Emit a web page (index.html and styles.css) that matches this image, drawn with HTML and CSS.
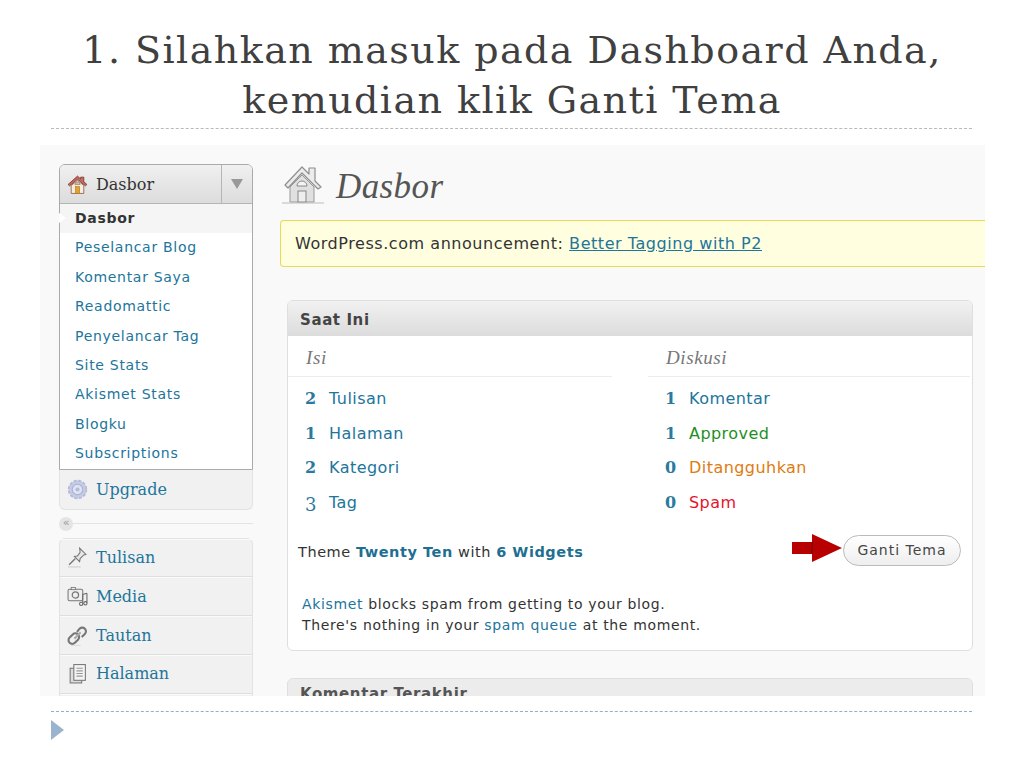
FILE: index.html
```html
<!DOCTYPE html>
<html lang="id">
<head>
<meta charset="utf-8">
<title>Ganti Tema</title>
<link rel="stylesheet" href="styles.css">
</head>
<body>
<div class="slide">
  <h1 class="title">1. Silahkan masuk pada Dashboard Anda,<br>kemudian klik Ganti Tema</h1>
  <div class="rule"></div>
  <div class="shot">
    <aside class="side">
      <div class="menu-open">
        <div class="menu-head">
          <div class="menu-head-label">
            <svg class="ic" viewBox="0 0 20 20"><path d="M1 10 10 2l3 2.700V3h3v4.400L19 10l-1.500 1.300L10 5 2.500 11.300z" fill="#c46a5e" stroke="#6d2a22" stroke-width=".7"/><path d="M4 11l6-5 6 5v7.500H4z" fill="#f4ece0" stroke="#8a5f4d" stroke-width=".8"/><path d="M7.500 10a2.500 2.500 0 0 1 5 0z" fill="#d9b9a8" stroke="#8a5f4d" stroke-width=".5"/><rect x="8" y="12" width="4" height="6.500" fill="#e2a32c" stroke="#a66f1a" stroke-width=".5"/></svg>
            <span>Dasbor</span>
          </div>
          <div class="menu-toggle"><span class="tri"></span></div>
        </div>
        <ul class="sub">
          <li class="cur"><span class="notch"></span>Dasbor</li>
          <li>Peselancar Blog</li>
          <li>Komentar Saya</li>
          <li>Readomattic</li>
          <li>Penyelancar Tag</li>
          <li>Site Stats</li>
          <li>Akismet Stats</li>
          <li>Blogku</li>
          <li>Subscriptions</li>
        </ul>
      </div>
      <div class="upgrade">
        <svg class="ic" viewBox="0 0 20 20"><circle cx="10" cy="10" r="8.500" fill="#c5cbe4" stroke="#b3b9d8" stroke-width="1.500" stroke-dasharray="3 1.500"/><circle cx="10" cy="10" r="5" fill="#dfe3f2" stroke="#aab1d2"/><circle cx="10" cy="10" r="2" fill="#b5bcda"/></svg>
        <span>Upgrade</span>
      </div>
      <div class="sep"><span class="sep-btn">«</span><span class="sep-line"></span></div>
      <div class="group">
        <div class="row">
          <svg class="ic" viewBox="0 0 20 20"><path d="M12 1l6 6-2 .5-3.500 3.500-.5 3-5-5 3-.5L12.500 5z" fill="#e8e8e8" stroke="#777" stroke-width="1"/><path d="M8 11l-6 6" stroke="#777" stroke-width="1.300"/><path d="M1 19h12" stroke="#ccc"/></svg>
          <span>Tulisan</span>
        </div>
        <div class="row">
          <svg class="ic" viewBox="0 0 20 20"><rect x="1" y="3" width="14" height="11" rx="1.500" fill="#eee" stroke="#777"/><rect x="4" y="1.500" width="4" height="2" fill="#eee" stroke="#777" stroke-width=".8"/><circle cx="8" cy="8.500" r="3" fill="none" stroke="#777" stroke-width="1.200"/><path d="M15 8v8M19 7v9M15 8l4-1" stroke="#666" fill="none"/><circle cx="13.500" cy="17" r="1.600" fill="none" stroke="#666"/><circle cx="17.500" cy="16.500" r="1.600" fill="none" stroke="#666"/></svg>
          <span>Media</span>
        </div>
        <div class="row">
          <svg class="ic" viewBox="0 0 20 20"><path d="M2.500 17a3.500 3.500 0 0 1 0-5l3-3a3.500 3.500 0 0 1 5 5l-3 3a3.500 3.500 0 0 1-5 0zM9.500 6.500l2.500-3a3.500 3.500 0 0 1 5 5l-3 3" fill="none" stroke="#777" stroke-width="2"/><path d="M7 13l6-6" stroke="#aaa" stroke-width="2"/><path d="M4 19.500h9" stroke="#ddd"/></svg>
          <span>Tautan</span>
        </div>
        <div class="row">
          <svg class="ic" viewBox="0 0 20 20"><rect x="3" y="5" width="11" height="14" fill="#ddd" stroke="#777"/><rect x="6.500" y="1.500" width="11" height="15" fill="#f3f3f3" stroke="#777"/><path d="M9 5h6M9 7.500h6M9 10h6M9 12.500h6" stroke="#999"/></svg>
          <span>Halaman</span>
        </div>
        <div class="row"></div>
      </div>
    </aside>
    <main class="main">
      <header class="page-head">
        <svg class="page-ic" viewBox="0 0 42 42"><path d="M3 23 20 5l7 7V6h6v13l6 6-3 2-16-16L6 26z" fill="#ececec" stroke="#8f8f8f" stroke-width="1.200" stroke-linejoin="round"/><path d="M8 25 20 13l12 12v15H8z" fill="#e0e0e0" stroke="#999"/><path d="M15 24a5 5 0 0 1 10 0z" fill="#f5f5f5" stroke="#888"/><rect x="16" y="29" width="8" height="11" fill="#eee" stroke="#888"/><path d="M0 41h42" stroke="#bbb"/></svg>
        <h2 class="page-name">Dasbor</h2>
      </header>
      <div class="notice">WordPress.com announcement: <a>Better Tagging with P2</a></div>
      <section class="card">
        <h3 class="card-head">Saat Ini</h3>
        <div class="cols">
          <div class="col">
            <div class="col-title">Isi</div>
            <ul class="stats">
              <li><b>2</b><span>Tulisan</span></li>
              <li><b>1</b><span>Halaman</span></li>
              <li><b>2</b><span>Kategori</span></li>
              <li><b class="desc">3</b><span>Tag</span></li>
            </ul>
          </div>
          <div class="col col-r">
            <div class="col-title">Diskusi</div>
            <ul class="stats">
              <li><b>1</b><span>Komentar</span></li>
              <li><b>1</b><span class="ok">Approved</span></li>
              <li><b>0</b><span class="wait">Ditangguhkan</span></li>
              <li><b>0</b><span class="spam">Spam</span></li>
            </ul>
          </div>
        </div>
        <div class="theme">
          <div class="theme-text">Theme <a class="strong">Twenty Ten</a> with <a class="strong">6 Widgets</a></div>
          <div class="btn-wrap">
            <svg class="arrow" viewBox="0 0 50 28"><path d="M0 8h20V0l30 14-30 14v-8H0z" fill="#b80000"/><path d="M20 8v12" stroke="#600" stroke-width="1"/></svg>
            <span class="btn">Ganti Tema</span>
          </div>
        </div>
        <p class="akismet"><a>Akismet</a> blocks spam from getting to your blog.<br>There's nothing in your <a>spam queue</a> at the moment.</p>
      </section>
      <section class="card card-next">
        <h3 class="card-head">Komentar Terakhir</h3>
      </section>
    </main>
  </div>
  <div class="rule rule-b"></div>
  <div class="bullet"></div>
</div>
</body>
</html>
```
FILE: styles.css
```css
* { box-sizing: border-box; }
html, body { margin: 0; padding: 0; background: #fff; }
ul { list-style: none; margin: 0; padding: 0; }
.slide { width: 1024px; height: 768px; overflow: hidden; display: flex; flex-direction: column; font-family: "DejaVu Sans", sans-serif; }
.title { margin: 25px 0 0; height: 103px; font: 400 38px/50px "DejaVu Serif", serif; letter-spacing: 1.450px; color: #404040; text-align: center; white-space: nowrap; }
.rule { margin: 0 52px 0 51px; height: 1px; border-top: 1px dashed #b9b9b9; }
.shot { margin: 16px 0 0 40px; width: 945px; height: 551px; flex: none; overflow: hidden; background: #f9f9f9; display: flex; padding: 19px 0 0 19px; }
.rule-b { margin-top: 15px; border-top-color: #8fb0c8; }
.bullet { margin: 8px 0 0 51px; width: 0; height: 0; border-left: 13px solid #9ab4cf; border-top: 10.500px solid transparent; border-bottom: 10.500px solid transparent; }
.side { width: 194px; flex: none; font-size: 14px; }
.ic { width: 21px; height: 21px; flex: none; }
.menu-open { border: 1px solid #aaa; border-radius: 6px 6px 0 0; background: #fff; }
.menu-head { height: 39px; display: flex; background: linear-gradient(#f0f0f0, #dcdcdc); border-bottom: 1px solid #b5b5b5; border-radius: 5px 5px 0 0; }
.menu-head-label { flex: 1; display: flex; align-items: center; gap: 8px; padding-left: 7px; font: 16px "DejaVu Serif", serif; color: #333; border-right: 1px solid #b5b5b5; }
.menu-toggle { width: 30px; display: flex; align-items: center; justify-content: center; }
.tri { width: 0; height: 0; border-top: 10px solid #999; border-left: 6px solid transparent; border-right: 6px solid transparent; }
.sub li { height: 29.400px; line-height: 29px; padding-left: 15px; color: #21759b; font-size: 14px; letter-spacing: .7px; }
.sub .cur { position: relative; background: #f5f5f5; color: #333; font-weight: 700; }
.notch { position: absolute; left: -1px; top: 9px; width: 7px; height: 10px; background: #fff; clip-path: polygon(0 0, 100% 50%, 0 100%); filter: drop-shadow(1px 0 0 #bbb); }
.upgrade { height: 40px; display: flex; align-items: center; gap: 8px; padding-left: 7px; background: #f1f1f1; border: 1px solid #e3e3e3; border-top: 0; border-radius: 0 0 6px 6px; font: 16px "DejaVu Serif", serif; color: #21759b; }
.sep { height: 28px; display: flex; align-items: center; }
.sep-btn { width: 14px; height: 14px; border-radius: 50%; background: #e4e4e4; color: #999; font: 11px/12px "DejaVu Sans", sans-serif; text-align: center; flex: none; }
.sep-line { flex: 1; height: 1px; background: #e3e3e3; }
.group { border: 1px solid #e3e3e3; border-radius: 6px 6px 0 0; background: #f1f1f1; }
.row { height: 38.800px; display: flex; align-items: center; gap: 8px; padding-left: 7px; border-bottom: 1px solid #dedede; box-shadow: inset 0 1px 0 #fafafa; font: 16px "DejaVu Serif", serif; color: #21759b; }
.main { margin-left: 27px; flex: 1; min-width: 0; }
.page-head { height: 58px; margin: -2px 0 0 2px; display: flex; gap: 12px; align-items: flex-start; }
.page-ic { width: 42px; height: 42px; flex: none; }
.page-name { margin: 3px 0 0; font: italic 400 35px/44px "Liberation Serif", serif; color: #555; letter-spacing: .4px; }
.notice { height: 47px; margin-bottom: 33px; padding-left: 14px; display: flex; align-items: center; white-space: pre-wrap; background: #ffffe0; border: 1px solid #e6db55; border-right: 0; border-radius: 4px 0 0 4px; font-size: 16px; letter-spacing: .55px; color: #333; }
.notice a { color: #21759b; text-decoration: underline; }
.card { margin: 0 12px 0 7px; height: 351px; background: #fff; border: 1px solid #dfdfdf; border-radius: 6px; font-size: 14px; color: #333; letter-spacing: .25px; }
.card-head { margin: 0; height: 35px; padding-left: 12px; font: 700 15px/38px "DejaVu Sans", sans-serif; letter-spacing: .6px; color: #444; background: linear-gradient(#f1f1f1, #dcdcdc); border-radius: 5px 5px 0 0; }
.cols { display: flex; justify-content: space-between; }
.col { width: 324px; }
.col-r { width: 322px; margin-right: 2px; }
.col-title { height: 41px; padding-left: 18px; font: italic 19px/43px "Liberation Serif", serif; letter-spacing: .6px; color: #777; border-bottom: 1px solid #ececec; }
.stats { padding-top: 4px; }
.stats li { height: 34.700px; display: flex; align-items: center; padding-left: 17px; font-size: 16px; letter-spacing: .45px; color: #21759b; }
.stats b { width: 24px; font: 700 16px "DejaVu Serif", serif; color: #2a7a9e; }
.stats .desc { padding-top: 5px; font-size: 18px; font-weight: 400; }
.ok { color: #1f8f1f; }
.wait { color: #e07b10; }
.spam { color: #e8112d; }
.theme { margin-top: 13px; height: 36px; padding: 0 11px 0 10px; display: flex; justify-content: space-between; align-items: center; font-size: 14.500px; letter-spacing: .55px; }
.theme-text { padding-top: 2px; }
.strong { color: #1f6f93; font-weight: 700; }
.btn-wrap { position: relative; }
.btn { display: block; width: 118px; height: 31px; border: 1px solid #bbb; border-radius: 16px; background: linear-gradient(#fff, #eee); text-align: center; font-size: 14px; letter-spacing: 1px; line-height: 29px; color: #464646; }
.arrow { position: absolute; left: -51px; top: -1px; width: 50px; height: 28px; }
.akismet { margin: 25px 0 0 14px; font-size: 14px; line-height: 21.500px; letter-spacing: .65px; }
.akismet a { color: #21759b; }
.card-next { margin-top: 27px; background: #ececec; }
.card-next .card-head { background: #ececec; font-size: 15px; letter-spacing: .6px; line-height: 31px; color: #555; }
```
